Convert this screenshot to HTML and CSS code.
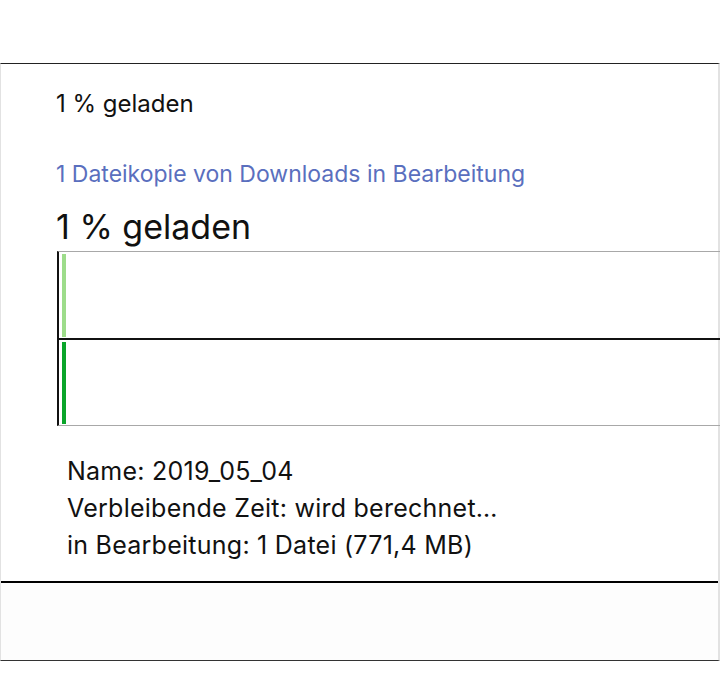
FILE: index.html
```html
<!DOCTYPE html>
<html lang="de">
<head>
<meta charset="utf-8">
<link rel="stylesheet" href="styles.css">
</head>
<body>
<div class="dialog">
  <div class="content">
    <div class="title">1 % geladen</div>
    <div class="subtitle">1 Dateikopie von Downloads in Bearbeitung</div>
    <div class="big">1 % geladen</div>
    <div class="progress">
      <div class="lane lane-top"><span class="bar bar-light"></span></div>
      <div class="lane lane-bottom"><span class="bar bar-dark"></span></div>
    </div>
    <div class="details">
      <div>Name: 2019_05_04</div>
      <div>Verbleibende Zeit: wird berechnet…</div>
      <div>in Bearbeitung: 1 Datei (771,4 MB)</div>
    </div>
  </div>
  <div class="footer"></div>
</div>
</body>
</html>
```
FILE: styles.css
```css
html, body {
  margin: 0;
  padding: 0;
  background: #ffffff;
}
body {
  padding-top: 63px;
  font-family: "Inter", "Open Sans", "Liberation Sans", sans-serif;
  color: #111;
}
.dialog {
  border-top: 1px solid #222;
  border-left: 1px solid #e2e2e2;
  border-right: 2px solid #e2e2e2;
  border-bottom: 1px solid #333;
  width: 717px;
}
.content {
  padding: 24px 0 0 55px;
  height: 517px;
  box-sizing: border-box;
}
.title {
  font-size: 24px;
  line-height: 32px;
}
.subtitle {
  margin-top: 40px;
  font-size: 23px;
  line-height: 28px;
  color: #5a6fbe;
}
.big {
  margin-top: 16px;
  margin-bottom: 1px;
  font-size: 34px;
  line-height: 46px;
}
.progress {
  margin-left: 1px;
  margin-right: -2px;
  border-top: 1px solid #a8a8a8;
  border-bottom: 1px solid #a8a8a8;
  border-left: 2px solid #111;
}
.lane {
  padding: 2px 0 1px 3px;
  box-sizing: border-box;
}
.lane-top {
  height: 86px;
}
.lane-bottom {
  height: 87px;
  border-top: 2px solid #111;
}
.bar {
  display: block;
  width: 4px;
  height: 100%;
}
.bar-light { background: #9ddc8a; }
.bar-dark { background: #0aa52a; }
.details {
  padding-left: 11px;
  margin-top: 27px;
  font-size: 25px;
  line-height: 37px;
  letter-spacing: 0.25px;
}
.footer {
  border-top: 2px solid #000;
  height: 77px;
  background: #fdfdfd;
}
```
